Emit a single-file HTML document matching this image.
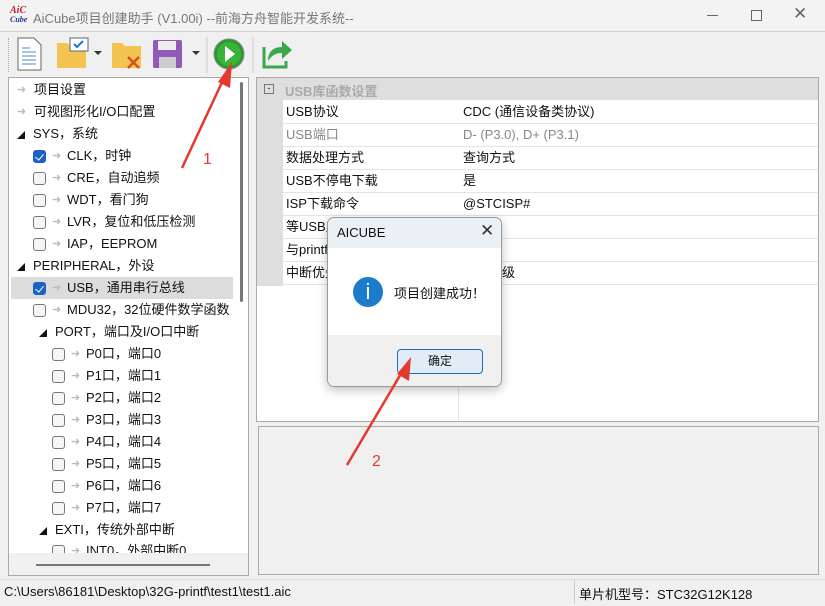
<!DOCTYPE html>
<html><head><meta charset="utf-8"><style>
*{box-sizing:border-box;margin:0;padding:0}
body{width:825px;height:606px;overflow:hidden;background:#f0f0f0;font-family:"Liberation Sans","Noto Sans CJK SC",sans-serif;font-size:13px;color:#111;position:relative}
.abs{position:absolute}
.row{position:absolute;left:0;height:22px;line-height:22px;white-space:nowrap}
.cb{position:absolute;top:5px;width:13px;height:13px;border:1px solid #777;border-radius:3px;background:#f6f6f6}
.cb.on{background:#1a63c4;border-color:#1a63c4}
.cb.on::after{content:"";position:absolute;left:3px;top:1px;width:4px;height:7px;border:solid #fff;border-width:0 1.5px 1.5px 0;transform:rotate(40deg)}
.arr{position:absolute;top:0;color:#bbb;font-size:11px}
.pr{position:absolute;left:283px;width:535px;height:23px;border-bottom:1px solid #e4e4e4;background:#fff;line-height:22px}
.pr span{position:absolute;left:3px}
.pr b{font-weight:normal;position:absolute;left:180px}
</style></head><body>
<div class="abs" style="left:0;top:0;width:825px;height:32px;background:#f3f3f3;border-bottom:1px solid #cfcfcf"></div>
<div class="abs" style="left:10px;top:6px;font:italic bold 10px 'Liberation Serif',serif;color:#c3202a;line-height:9px">AiC<br><span style="color:#223aa0;font-size:8px">Cube</span></div>
<div class="abs" style="left:33px;top:8px;color:#777;font-size:13px">AiCube项目创建助手 (V1.00i) --前海方舟智能开发系统--</div>
<div class="abs" style="left:707px;top:15px;width:11px;height:1px;background:#666"></div>
<div class="abs" style="left:751px;top:10px;width:11px;height:11px;border:1px solid #666"></div>
<div class="abs" style="left:793px;top:4px;font-size:17px;color:#666">✕</div>
<div class="abs" style="left:8px;top:38px;width:1px;height:34px;border-left:1px dotted #aaa"></div>
<svg class="abs" style="left:0;top:33px" width="300" height="44">
<path d="M18 5h16l7 7v25H18z" fill="#fff" stroke="#666"/><path d="M22 15h8M22 19h14M22 23h14M22 27h14M22 31h14" stroke="#4a8ad8"/>
<path d="M57 10h10l3 3h16v22H57z" fill="#f4c453"/><rect x="70" y="5" width="18" height="13" fill="#fff" stroke="#567"/><path d="M74 11l3 3 6-6" stroke="#1a78d0" fill="none" stroke-width="2"/>
<path d="M94 18l4 4 4-4z" fill="#333"/>
<path d="M112 10h10l3 3h16v22h-29z" fill="#f4c453"/><path d="M128 24l11 11M139 24l-11 11" stroke="#d6501f" stroke-width="2.5"/>
<rect x="153" y="7" width="29" height="28" rx="2" fill="#9159b8"/><rect x="158" y="8" width="18" height="9" fill="#eee"/><rect x="159" y="24" width="17" height="11" fill="#ccc"/>
<path d="M192 18l4 4 4-4z" fill="#333"/>
<line x1="207" y1="4" x2="207" y2="40" stroke="#ccc"/>
<circle cx="229" cy="21" r="15" fill="#2a9a2a" stroke="#888"/><circle cx="229" cy="21" r="12" fill="#38b538"/><path d="M225 13l10 8-10 8z" fill="#fff"/>
<line x1="253" y1="4" x2="253" y2="40" stroke="#ccc"/>
<path d="M264 14v20h22v-6" fill="none" stroke="#3aa84a" stroke-width="3"/><path d="M268 28c0-10 6-14 14-14v-6l10 9-10 9v-6c-6 0-10 2-14 8z" fill="#3aa84a"/>
</svg>
<div class="abs" style="left:8px;top:77px;width:241px;height:499px;background:#fff;border:1px solid #aaa;overflow:hidden">
<div class="abs" style="left:231px;top:4px;width:3px;height:220px;background:#777;border-radius:2px"></div>
<div class="abs" style="left:0;top:475px;width:240px;height:23px;background:#f0f0f0"></div>
<div class="abs" style="left:27px;top:486px;width:174px;height:2px;background:#777"></div>
<div class="abs" style="left:0;top:0;width:232px">
<div class="row" style="top:1px;left:8px"><span class="arr">➜</span><span style="margin-left:17px">项目设置</span></div>
<div class="row" style="top:23px;left:8px"><span class="arr">➜</span><span style="margin-left:17px">可视图形化I/O口配置</span></div>
<div class="row" style="top:45px;left:8px"><span style="font-size:8px">◢</span><span style="margin-left:8px">SYS，系统</span></div>
<div class="row" style="top:67px;left:24px"><span class="cb on"></span><span class="arr" style="left:19px">➜</span><span style="margin-left:34px">CLK，时钟</span></div>
<div class="row" style="top:89px;left:24px"><span class="cb"></span><span class="arr" style="left:19px">➜</span><span style="margin-left:34px">CRE，自动追频</span></div>
<div class="row" style="top:111px;left:24px"><span class="cb"></span><span class="arr" style="left:19px">➜</span><span style="margin-left:34px">WDT，看门狗</span></div>
<div class="row" style="top:133px;left:24px"><span class="cb"></span><span class="arr" style="left:19px">➜</span><span style="margin-left:34px">LVR，复位和低压检测</span></div>
<div class="row" style="top:155px;left:24px"><span class="cb"></span><span class="arr" style="left:19px">➜</span><span style="margin-left:34px">IAP，EEPROM</span></div>
<div class="row" style="top:177px;left:8px"><span style="font-size:8px">◢</span><span style="margin-left:8px">PERIPHERAL，外设</span></div>
<div class="abs" style="left:2px;top:199px;width:222px;height:22px;background:#dcdcdc"></div>
<div class="row" style="top:199px;left:24px"><span class="cb on"></span><span class="arr" style="left:19px">➜</span><span style="margin-left:34px">USB，通用串行总线</span></div>
<div class="row" style="top:221px;left:24px"><span class="cb"></span><span class="arr" style="left:19px">➜</span><span style="margin-left:34px">MDU32，32位硬件数学函数</span></div>
<div class="row" style="top:243px;left:30px"><span style="font-size:8px">◢</span><span style="margin-left:8px">PORT，端口及I/O口中断</span></div>
<div class="row" style="top:265px;left:43px"><span class="cb"></span><span class="arr" style="left:19px">➜</span><span style="margin-left:34px">P0口，端口0</span></div>
<div class="row" style="top:287px;left:43px"><span class="cb"></span><span class="arr" style="left:19px">➜</span><span style="margin-left:34px">P1口，端口1</span></div>
<div class="row" style="top:309px;left:43px"><span class="cb"></span><span class="arr" style="left:19px">➜</span><span style="margin-left:34px">P2口，端口2</span></div>
<div class="row" style="top:331px;left:43px"><span class="cb"></span><span class="arr" style="left:19px">➜</span><span style="margin-left:34px">P3口，端口3</span></div>
<div class="row" style="top:353px;left:43px"><span class="cb"></span><span class="arr" style="left:19px">➜</span><span style="margin-left:34px">P4口，端口4</span></div>
<div class="row" style="top:375px;left:43px"><span class="cb"></span><span class="arr" style="left:19px">➜</span><span style="margin-left:34px">P5口，端口5</span></div>
<div class="row" style="top:397px;left:43px"><span class="cb"></span><span class="arr" style="left:19px">➜</span><span style="margin-left:34px">P6口，端口6</span></div>
<div class="row" style="top:419px;left:43px"><span class="cb"></span><span class="arr" style="left:19px">➜</span><span style="margin-left:34px">P7口，端口7</span></div>
<div class="row" style="top:441px;left:30px"><span style="font-size:8px">◢</span><span style="margin-left:8px">EXTI，传统外部中断</span></div>
<div class="row" style="top:462px;left:43px;height:13px;overflow:hidden"><span class="cb"></span><span class="arr" style="left:19px">➜</span><span style="margin-left:34px">INT0，外部中断0</span></div>
</div></div>
<div class="abs" style="left:256px;top:77px;width:563px;height:345px;background:#fff;border:1px solid #aaa"></div>
<div class="abs" style="left:257px;top:78px;width:561px;height:22px;background:#dedede"></div>
<div class="abs" style="left:257px;top:78px;width:26px;height:208px;background:#dedede"></div>
<div class="abs" style="left:264px;top:84px;width:10px;height:10px;border:1px solid #777;font-size:9px;line-height:7px;text-align:center">-</div>
<div class="abs" style="left:285px;top:81px;color:#aaa;font-weight:bold">USB库函数设置</div>
<div class="abs" style="left:458px;top:100px;width:1px;height:321px;background:#e4e4e4"></div>
<div class="pr" style="top:101px"><span>USB协议</span><b>CDC (通信设备类协议)</b></div>
<div class="pr" style="top:124px;color:#888"><span>USB端口</span><b>D- (P3.0), D+ (P3.1)</b></div>
<div class="pr" style="top:147px"><span>数据处理方式</span><b>查询方式</b></div>
<div class="pr" style="top:170px"><span>USB不停电下载</span><b>是</b></div>
<div class="pr" style="top:193px"><span>ISP下载命令</span><b>@STCISP#</b></div>
<div class="pr" style="top:216px"><span>等USB主机</span><b></b></div>
<div class="pr" style="top:239px"><span>与printf</span><b></b></div>
<div class="pr" style="top:262px"><span>中断优先级</span><b>低优先级</b></div>
<div class="abs" style="left:258px;top:426px;width:561px;height:149px;background:#f0f0f0;border:1px solid #aaa"></div>
<div class="abs" style="left:0;top:579px;width:825px;height:27px;background:#f0f0f0;border-top:1px solid #ddd"></div>
<div class="abs" style="left:4px;top:584px">C:\Users\86181\Desktop\32G-printf\test1\test1.aic</div>
<div class="abs" style="left:574px;top:580px;width:1px;height:24px;background:#ccc"></div>
<div class="abs" style="left:579px;top:584px">单片机型号：STC32G12K128</div>
<div class="abs" style="left:327px;top:217px;width:175px;height:170px;border:1px solid #999;border-radius:7px;overflow:hidden;background:#fff;box-shadow:0 3px 10px rgba(0,0,0,.25)">
<div class="abs" style="left:0;top:0;width:175px;height:30px;background:#e9f1f5"></div>
<div class="abs" style="left:9px;top:7px;font-size:13px">AICUBE</div>
<div class="abs" style="left:152px;top:3px;font-size:17px;color:#333">✕</div>
<div class="abs" style="left:25px;top:59px;width:30px;height:30px;border-radius:50%;background:#1c7ccb;color:#fff;text-align:center;line-height:30px;font-size:22px">i</div>
<div class="abs" style="left:66px;top:65px;font-size:13px">项目创建成功！</div>
<div class="abs" style="left:0;top:117px;width:175px;height:53px;background:#f0f0f0"></div>
<div class="abs" style="left:69px;top:131px;width:86px;height:25px;border:1px solid #1b6fc0;border-radius:4px;background:#e1ecf6;text-align:center;line-height:23px;font-size:12px">确定</div>
</div>
<svg class="abs" style="left:0;top:0" width="825" height="606">
<line x1="182" y1="168" x2="224" y2="78" stroke="#e5382f" stroke-width="2.5"/><path d="M232 62l-2 26-12-6z" fill="#e5382f"/>
<text x="203" y="164" fill="#e5382f" font-size="16" font-family="Liberation Sans">1</text>
<line x1="347" y1="465" x2="402" y2="372" stroke="#e5382f" stroke-width="2.5"/><path d="M411 357l-2 24-12-7z" fill="#e5382f"/>
<text x="372" y="466" fill="#e5382f" font-size="16" font-family="Liberation Sans">2</text>
</svg>
</body></html>
